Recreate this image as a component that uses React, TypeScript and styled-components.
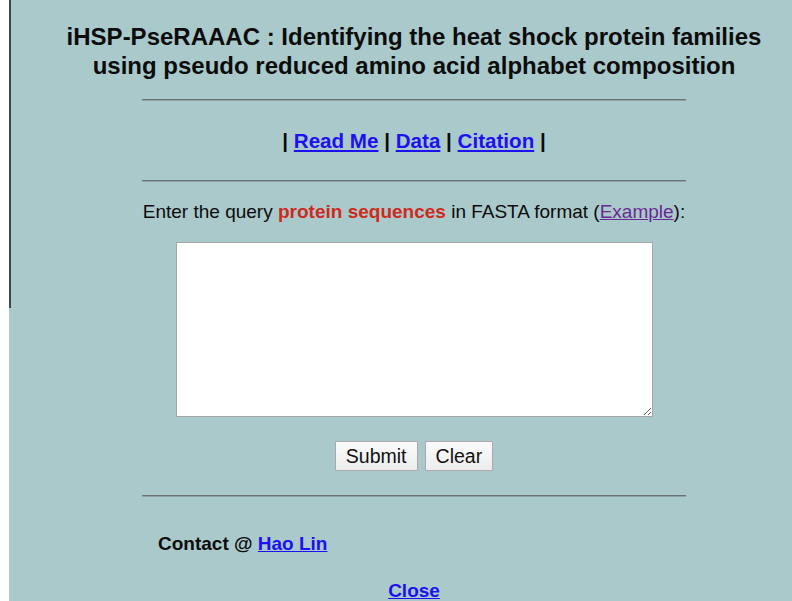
import styled, { createGlobalStyle } from "styled-components";

const GlobalStyle = createGlobalStyle`
  html, body {
    margin: 0;
    padding: 0;
    background: #ffffff;
    overflow: hidden;
  }
  body {
    font-family: "Liberation Sans", Arial, sans-serif;
    color: #0c0c0c;
  }
`;

const Panel = styled.div`
  position: relative;
  width: 810px;
  min-height: 601px;
  margin-left: 9px;
  background: #a9c9cb;
  padding-top: 22px;
  box-sizing: border-box;

  &::before {
    content: "";
    position: absolute;
    left: 0;
    top: 0;
    width: 2px;
    height: 308px;
    background: #3c4649;
  }
`;

const Title = styled.h1`
  margin: 0;
  font-size: 24px;
  line-height: 29px;
  font-weight: bold;
  text-align: center;
`;

const Column = styled.div`
  width: 544px;
  margin: 0 auto;
`;

const Rule = styled.hr<{ $top: number }>`
  margin: ${(p) => p.$top}px 0 0;
  height: 0;
  border: none;
  border-top: 1px solid #6b7374;
  border-bottom: 1px solid #8fa3a5;
`;

const Nav = styled.div`
  margin-top: 28px;
  text-align: center;
  font-size: 20.6px;
  line-height: 24px;
  font-weight: bold;
`;

const Link = styled.a<{ $visited?: boolean }>`
  color: ${(p) => (p.$visited ? "#6a2a95" : "#1d10f2")};
  text-decoration: underline;
  cursor: pointer;
`;

const Prompt = styled.p`
  margin: 19px 0 0;
  font-size: 19px;
  line-height: 22px;
  text-align: center;
  white-space: nowrap;
`;

const Hot = styled.b`
  color: #cf2a20;
`;

const SequenceBox = styled.textarea`
  display: block;
  width: 477px;
  height: 175px;
  box-sizing: border-box;
  margin: 19px auto 0;
  border: 1px solid #a6a6a6;
  background: #fff;
  resize: both;
  font-family: "Liberation Mono", monospace;
`;

const Actions = styled.div`
  margin-top: 24px;
  display: flex;
  justify-content: center;
  gap: 7px;
`;

const Button = styled.button`
  height: 30px;
  padding: 0 10px;
  font-family: "Liberation Sans", Arial, sans-serif;
  font-size: 19.5px;
  color: #111;
  background: linear-gradient(#fbfbfb, #ececec);
  border: 1px solid #a9a9a9;
  border-radius: 1px;
`;

const Contact = styled.div`
  margin: 36px 0 0 16px;
  font-size: 19px;
  line-height: 22px;
  font-weight: bold;
`;

const Footer = styled.div`
  margin-top: 25px;
  text-align: center;
  font-size: 19px;
  line-height: 22px;
  font-weight: bold;
`;

export default function App() {
  return (
    <>
      <GlobalStyle />
      <Panel>
        <Title>
          iHSP-PseRAAAC : Identifying the heat shock protein families
          <br />
          using pseudo reduced amino acid alphabet composition
        </Title>
        <Column>
          <Rule $top={19} />
          <Nav>
            | <Link>Read Me</Link> | <Link>Data</Link> | <Link>Citation</Link> |
          </Nav>
          <Rule $top={27} />
          <Prompt>
            Enter the query <Hot>protein sequences</Hot> in FASTA format (
            <Link $visited>Example</Link>):
          </Prompt>
          <SequenceBox />
          <Actions>
            <Button type="button">Submit</Button>
            <Button type="button">Clear</Button>
          </Actions>
          <Rule $top={24} />
          <Contact>
            Contact @ <Link>Hao Lin</Link>
          </Contact>
          <Footer>
            <Link>Close</Link>
          </Footer>
        </Column>
      </Panel>
    </>
  );
}
